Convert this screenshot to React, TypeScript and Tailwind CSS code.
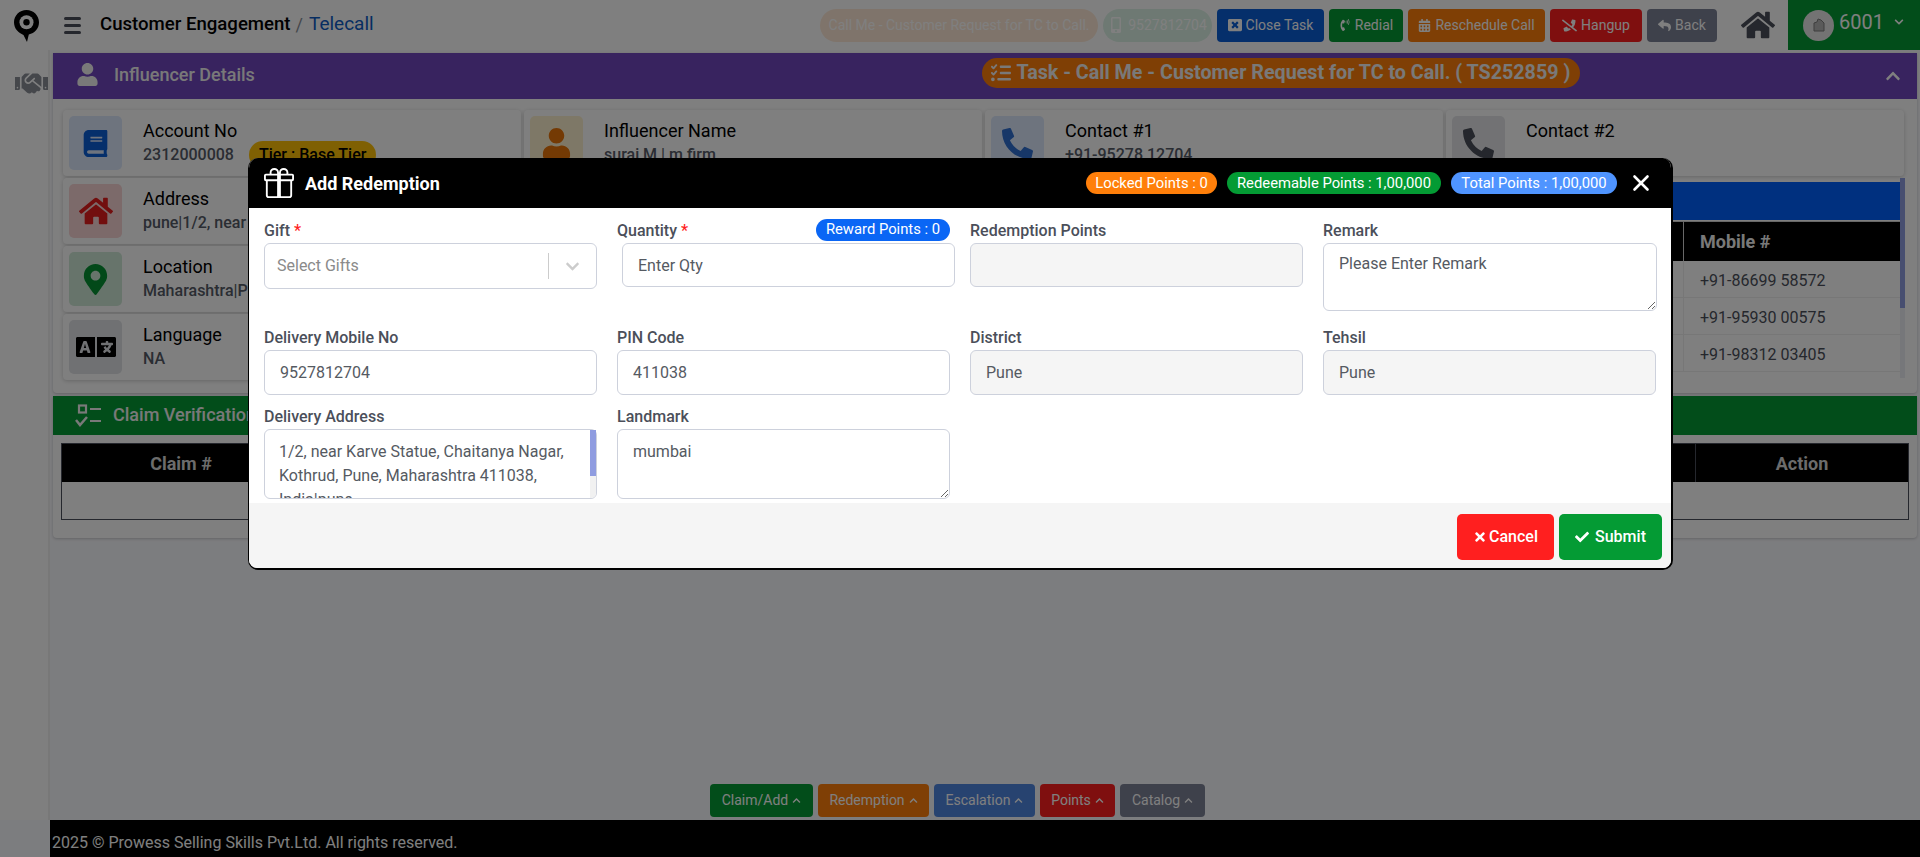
import type { ReactNode } from "react"
import { BsGift } from "react-icons/bs"
import {
  FaBook,
  FaCalendarAlt,
  FaCheck,
  FaChevronDown,
  FaChevronUp,
  FaHome,
  FaLanguage,
  FaMapMarkerAlt,
  FaMobileAlt,
  FaPhoneAlt,
  FaPhoneSlash,
  FaPhoneVolume,
  FaReply,
  FaTimes,
  FaUser,
  FaWindowClose,
  FaHandshake,
} from "react-icons/fa"
import { FaListCheck } from "react-icons/fa6"
import { X } from "lucide-react"

function TopButton({ className, icon, label }: { className: string; icon: ReactNode; label: string }) {
  return (
    <button className={`h-[33px] rounded-[4px] flex items-center justify-center gap-1 text-[14px] text-white ${className}`}>
      {icon}
      {label}
    </button>
  )
}

function InfoCard({
  tint,
  icon,
  title,
  sub,
  badge,
}: {
  tint: string
  icon: ReactNode
  title: string
  sub?: string
  badge?: string
}) {
  return (
    <div className="h-[66px] w-[458px] bg-white rounded-[4px] shadow-[0_1px_4px_rgba(0,0,0,0.2)] flex items-center pl-[6px] overflow-hidden">
      <div className={`w-[53px] h-[54px] rounded-[5px] flex items-center justify-center shrink-0 ${tint}`}>{icon}</div>
      <div className="ml-[21px]">
        <div className="text-[18px] leading-[22px] text-black">{title}</div>
        <div className="mt-[2px] flex items-center h-[22px] text-[16px] font-medium text-[#555a66] whitespace-nowrap">
          {sub}
          {badge && (
            <span className="ml-[15px] h-[28px] px-[10px] rounded-full bg-[#ffc107] text-black flex items-center">{badge}</span>
          )}
        </div>
      </div>
    </div>
  )
}

function Label({ text, required }: { text: string; required?: boolean }) {
  return (
    <div className="h-[24px] leading-[24px] text-[16px] font-medium text-[#4b4f5a] whitespace-nowrap flex gap-[4px]">
      <span>{text}</span>
      {required && <span className="text-[#ff1f1f]">*</span>}
    </div>
  )
}

function Field({ label, value, disabled }: { label: string; value: string; disabled?: boolean }) {
  return (
    <div className="w-[333px]">
      <Label text={label} />
      <input
        readOnly
        value={value}
        className={`w-full h-[45px] px-[15px] border border-[#cdd1dc] rounded-[6px] text-[16px] text-[#555a62] outline-none ${disabled ? "bg-[#f5f5f5]" : "bg-white"}`}
      />
    </div>
  )
}

function BottomTab({ className, label }: { className: string; label: string }) {
  return (
    <button className={`h-[33px] rounded-[4px] flex items-center justify-center gap-[4px] text-[14px] text-white ${className}`}>
      {label}
      <FaChevronUp className="text-[9px]" />
    </button>
  )
}

export default function App() {
  return (
    <div className="relative h-[857px] overflow-hidden bg-[#f9fafe] font-['Roboto',sans-serif]">
      {/* top bar */}
      <header className="h-[50px] bg-white flex items-center relative">
        <svg viewBox="0 0 25 32" className="ml-[14px] w-[25px] h-[32px] shrink-0 self-start mt-[10px]">
          <path d="M12.5 0C5.6 0 0 5.5 0 12.3c0 6.6 4.6 10.800 9.500 12.600L13 32l1.800-7.500C20.600 23.400 25 18.600 25 12.300 25 5.500 19.400 0 12.500 0Z" fill="#000" />
          <circle cx="12.500" cy="12.300" r="7" fill="#fff" />
          <circle cx="12.500" cy="12.300" r="3.200" fill="#000" />
        </svg>
        <div className="ml-[25px] flex flex-col gap-[4px] w-[17px]">
          <span className="h-[3px] rounded bg-[#4b4f5a]" />
          <span className="h-[3px] rounded bg-[#4b4f5a]" />
          <span className="h-[3px] rounded bg-[#4b4f5a]" />
        </div>
        <div className="ml-[19px] text-[18.600px] font-medium text-black pb-[1px]">Customer Engagement</div>
        <div className="ml-[5px] text-[18px] text-[#8a8f98] pb-[1px]">/</div>
        <div className="ml-[6px] text-[19px] text-[#0d5bc4] pb-[1px]">Telecall</div>

        <div className="ml-auto flex items-center h-full">
          <div className="flex items-center gap-[5px]">
            <div className="h-[33px] w-[278px] rounded-full bg-[#ffe9d6] text-white text-[14px] flex items-center justify-center whitespace-nowrap">
              Call Me - Customer Request for TC to Call.
            </div>
            <div className="h-[33px] w-[109px] rounded-full bg-[#dcf2e6] text-white text-[14px] flex items-center justify-center gap-1">
              <FaMobileAlt className="text-[16px]" />
              9527812704
            </div>
            <TopButton className="w-[107px] bg-[#0a5ed7]" icon={<FaWindowClose className="text-[14px]" />} label="Close Task" />
            <TopButton className="w-[74px] bg-[#049b34]" icon={<FaPhoneVolume className="text-[12px]" />} label="Redial" />
            <TopButton className="w-[137px] bg-[#ff7f0a]" icon={<FaCalendarAlt className="text-[13px]" />} label="Reschedule Call" />
            <TopButton className="w-[92px] bg-[#ff1f1f]" icon={<FaPhoneSlash className="text-[15px]" />} label="Hangup" />
            <TopButton className="w-[70px] bg-[#7c8296]" icon={<FaReply className="text-[13px]" />} label="Back" />
          </div>
          <FaHome className="ml-[24px] text-[34px] text-[#4b4f5a]" />
          <div className="ml-[13px] w-[132px] h-full bg-[#049b34] flex items-center pl-[15px] text-white">
            <div className="w-[31px] h-[31px] rounded-full bg-[#e6e6e6] flex items-center justify-center">
              <svg viewBox="0 0 16 16" className="w-[16px] h-[16px]">
                <path d="M3 14V6l3-1 1-3 3 1 3 3v8Z" fill="#b5b5b5" stroke="#7d7d7d" strokeWidth="1" />
              </svg>
            </div>
            <span className="ml-[5px] text-[20px] mb-[6px]">6001</span>
            <FaChevronDown className="ml-[10px] text-[10px] mb-[6px]" />
          </div>
        </div>
      </header>

      <div className="flex h-[770px]">
        {/* left rail */}
        <aside className="w-[50px] bg-white border-r-[2px] border-[#f0f0f0] shrink-0 pt-[17px] pl-[15px]">
          <FaHandshake className="text-[33px] text-[#8a8e97]" />
        </aside>

        <main className="flex-1 min-w-0 pt-[3px] pl-[3px] pr-[3px] flex flex-col">
          {/* influencer panel */}
          <section className="bg-white rounded-b-[4px] shadow-[0_1px_3px_rgba(0,0,0,0.2)] h-[340px]">
            <div className="h-[46px] bg-[#7046be] flex items-center text-white">
              <FaUser className="ml-[23px] text-[23px] text-[#f2f2f2] mb-[3px]" />
              <span className="ml-[15px] text-[18px] font-medium text-[#f2f2f2] mb-[3px]">Influencer Details</span>
              <div className="ml-[727px] h-[30px] w-[598px] rounded-full bg-[#ff7f0a] flex items-center justify-center gap-[5px] text-[19.700px] font-bold text-[#f2f2f2] whitespace-nowrap mb-[6px]">
                <FaListCheck className="text-[20px]" />
                Task - Call Me - Customer Request for TC to Call. ( TS252859 )
              </div>
              <FaChevronUp className="ml-auto mr-[16px] text-[16px]" />
            </div>
            <div className="pl-[10px] pt-[11px]">
              <div className="grid grid-cols-[461px_461px_461px_461px]">
                <InfoCard
                  tint="bg-[#dce8fc]"
                  icon={<FaBook className="text-[27px] text-[#0a5ed7]" />}
                  title="Account No"
                  sub="2312000008"
                  badge="Tier : Base Tier"
                />
                <InfoCard tint="bg-[#fdf1cf]" icon={<FaUser className="text-[31px] text-[#e87408]" />} title="Influencer Name" sub="suraj M | m firm" />
                <InfoCard tint="bg-[#dce8fc]" icon={<FaPhoneAlt className="text-[31px] text-[#2f6fd0]" />} title="Contact #1" sub="+91-95278 12704" />
                <InfoCard tint="bg-[#e4e5e8]" icon={<FaPhoneAlt className="text-[31px] text-[#4b4f5a]" />} title="Contact #2" />
              </div>
              <div className="flex mt-[2px]">
                <div className="flex flex-col gap-[2px] w-[461px] shrink-0">
                  <InfoCard tint="bg-[#f8d4d4]" icon={<FaHome className="text-[34px] text-[#e41c1c]" />} title="Address" sub="pune|1/2, near Karve Statue" />
                  <InfoCard tint="bg-[#cfe8d6]" icon={<FaMapMarkerAlt className="text-[31px] text-[#059233]" />} title="Location" sub="Maharashtra|Pune" />
                  <InfoCard tint="bg-[#e0e2e6]" icon={<FaLanguage className="text-[40px] text-black" />} title="Language" sub="NA" />
                </div>
                <div className="w-[1381px] mt-[4px] relative">
                  <div className="h-[38px] bg-[#0060ff] mr-[5px]" />
                  <div className="h-[40px] mt-[1px] mr-[5px] bg-black flex justify-end border-t border-[#d0d0d0]">
                    <div className="w-[217px] pl-[16px] border-l border-[#d0d0d0] flex items-center text-[18px] font-bold text-[#f2f2f2]">Mobile #</div>
                  </div>
                  {["+91-86699 58572", "+91-95930 00575", "+91-98312 03405"].map((m) => (
                    <div key={m} className="h-[37px] mr-[5px] flex justify-end border-b border-[#eeeeee]">
                      <div className="w-[217px] pl-[16px] pt-[4px] border-l border-[#eeeeee] flex items-center text-[16px] text-[#4b4f5a]">{m}</div>
                    </div>
                  ))}
                  <div className="absolute right-0 -top-[4px] w-[5px] h-[200px] bg-[#eceef5]">
                    <div className="h-[130px] bg-[#8f9ce0]" />
                  </div>
                </div>
              </div>
            </div>
          </section>

          {/* claim panel */}
          <section className="mt-[3px] bg-white rounded-b-[4px] shadow-[0_1px_3px_rgba(0,0,0,0.2)] h-[142px]">
            <div className="h-[39px] bg-[#049b34] flex items-center text-[#f2f2f2]">
              <svg viewBox="0 0 26 24" className="ml-[22px] w-[26px] h-[24px]" fill="none" stroke="currentColor" strokeWidth="2.2">
                <rect x="4" y="1.500" width="7" height="7" />
                <path d="M15 5h11M15 17h11" />
                <path d="M1 16l4 5 7-8" strokeWidth="2.500" />
              </svg>
              <span className="ml-[12px] text-[18px] font-medium mb-[2px]">Claim Verification</span>
            </div>
            <div className="mx-[8px] mt-[8px] border border-[#4b4f5a]">
              <div className="h-[38px] bg-black flex items-center text-[18px] font-bold text-[#d8d8d8]">
                <div className="w-[238px] text-center">Claim #</div>
                <div className="flex-1" />
                <div className="w-[213px] h-full border-l border-[#4b4f5a] flex items-center justify-center">Action</div>
              </div>
              <div className="h-[37px] bg-white" />
            </div>
          </section>

          {/* quick actions */}
          <div className="mt-auto mb-[3px] ml-[657px] flex gap-[5px]">
            <BottomTab className="w-[103px] bg-[#049b34]" label="Claim/Add" />
            <BottomTab className="w-[111px] bg-[#ff7f0a]" label="Redemption" />
            <BottomTab className="w-[101px] bg-[#4f86e0]" label="Escalation" />
            <BottomTab className="w-[75px] bg-[#ff1f1f]" label="Points" />
            <BottomTab className="w-[85px] bg-[#7c8296]" label="Catalog" />
          </div>
        </main>
      </div>

      <footer className="ml-[50px] h-[37px] bg-black text-[16px] text-white flex items-center pl-[2px] pt-[8px]">
        2025 © Prowess Selling Skills Pvt.Ltd. All rights reserved.
      </footer>

      {/* modal */}
      <div className="absolute inset-0 bg-black/50 pl-[248px] pt-[158px]">
        <div className="w-[1425px] h-[412px] rounded-[10px] overflow-hidden bg-white border-l border-r-2 border-b-2 border-black">
          <div className="h-[50px] bg-black flex items-center text-white -ml-[1px]">
            <BsGift className="ml-[16px] text-[30px]" />
            <span className="ml-[11px] text-[18px] font-bold">Add Redemption</span>
            <div className="ml-auto flex items-center gap-[10px] text-[14.800px]">
              <span className="h-[22px] w-[131px] rounded-full bg-[#ff7f0a] flex items-center justify-center">Locked Points : 0</span>
              <span className="h-[22px] w-[214px] rounded-full bg-[#049b34] flex items-center justify-center">Redeemable Points : 1,00,000</span>
              <span className="h-[22px] w-[166px] rounded-full bg-[#4f94ff] flex items-center justify-center">Total Points : 1,00,000</span>
            </div>
            <X className="ml-[11px] mr-[17px] w-[26px] h-[26px]" strokeWidth={2.4} />
          </div>

          <div className="h-[295px] pl-[15px] pt-[11px]">
            <div className="flex gap-[20px] h-[107px]">
              <div className="w-[333px]">
                <Label text="Gift" required />
                <div className="h-[46px] border border-[#cdd1dc] rounded-[6px] flex items-center pl-[12px] text-[16px] text-[#8a8a8a]">
                  Select Gifts
                  <span className="ml-auto w-px h-[26px] bg-[#cccccc]" />
                  <FaChevronDown className="mx-[16px] text-[15px] text-[#cccccc]" />
                </div>
              </div>
              <div className="w-[333px]">
                <div className="flex justify-between h-[24px] items-center">
                  <Label text="Quantity" required />
                  <span className="h-[22px] w-[134px] rounded-full bg-[#0a66f5] text-white text-[14.800px] flex items-center justify-center -mt-[3px]">Reward Points : 0</span>
                </div>
                <input
                  placeholder="Enter Qty"
                  className="w-[333px] ml-[5px] h-[44px] px-[15px] border border-[#cdd1dc] rounded-[6px] text-[16px] placeholder:text-[#555a62] outline-none"
                />
              </div>
              <div className="w-[333px]">
                <Label text="Redemption Points" />
                <div className="h-[44px] border border-[#cdd1dc] rounded-[6px] bg-[#f5f5f5]" />
              </div>
              <div className="w-[334px]">
                <Label text="Remark" />
                <textarea
                  placeholder="Please Enter Remark"
                  className="block w-full h-[68px] px-[15px] py-[8px] border border-[#cdd1dc] rounded-[6px] text-[16px] placeholder:text-[#555a62] outline-none"
                />
              </div>
            </div>

            <div className="flex gap-[20px] h-[79px]">
              <Field label="Delivery Mobile No" value="9527812704" />
              <Field label="PIN Code" value="411038" />
              <Field label="District" value="Pune" disabled />
              <Field label="Tehsil" value="Pune" disabled />
            </div>

            <div className="flex gap-[20px]">
              <div className="w-[333px]">
                <Label text="Delivery Address" />
                <div className="relative h-[70px]">
                  <textarea
                    readOnly
                    value="1/2, near Karve Statue, Chaitanya Nagar, Kothrud, Pune, Maharashtra 411038, India|pune"
                    className="block w-full h-full pl-[14px] pr-[10px] py-[10px] leading-[24px] border border-[#cdd1dc] rounded-[6px] text-[16px] text-[#555a62] outline-none resize-none overflow-hidden"
                  />
                  <div className="absolute right-[1px] top-[1px] bottom-[1px] w-[6px] bg-[#f1f1f1] rounded-r-[5px]">
                    <div className="h-[46px] bg-[#8f9ce0]" />
                  </div>
                </div>
              </div>
              <div className="w-[333px]">
                <Label text="Landmark" />
                <textarea
                  readOnly
                  value="mumbai"
                  className="block w-full h-[70px] px-[15px] py-[10px] leading-[24px] border border-[#cdd1dc] rounded-[6px] text-[16px] text-[#555a62] outline-none"
                />
              </div>
            </div>
          </div>

          <div className="h-[65px] bg-[#f5f5f5] flex items-start justify-end gap-[5px] pt-[11px] pr-[9px]">
            <button className="w-[97px] h-[46px] rounded-[5px] bg-[#ff1f1f] text-white text-[16px] font-medium flex items-center justify-center gap-[2px]">
              <FaTimes className="text-[14px]" />
              Cancel
            </button>
            <button className="w-[103px] h-[46px] rounded-[5px] bg-[#049b34] text-white text-[16px] font-medium flex items-center justify-center gap-[6px]">
              <FaCheck className="text-[14px]" />
              Submit
            </button>
          </div>
        </div>
      </div>
    </div>
  )
}
